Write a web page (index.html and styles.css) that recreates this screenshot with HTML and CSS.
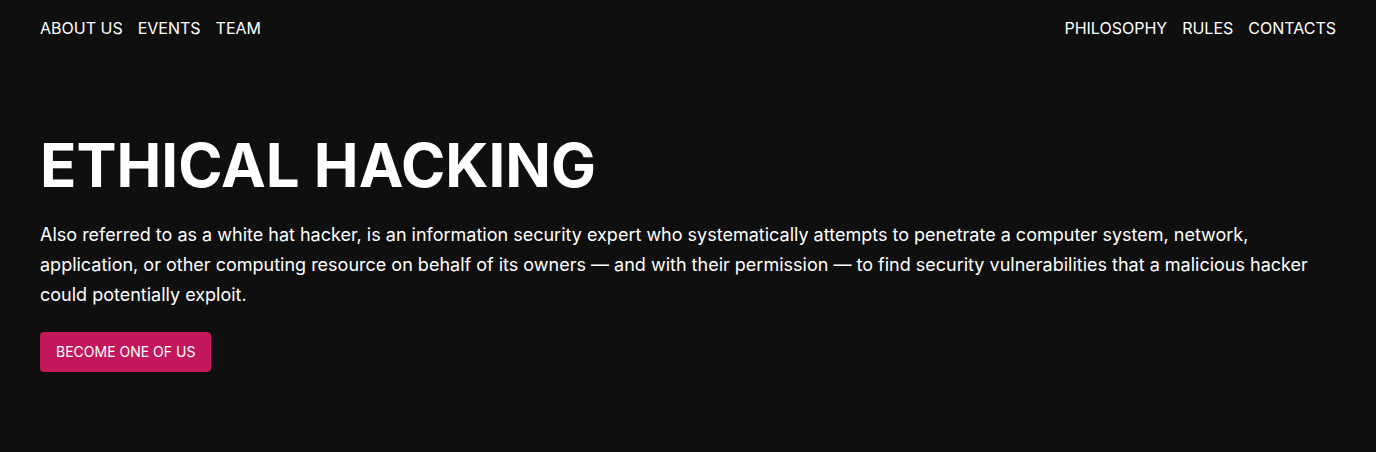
FILE: index.html
```html
<!DOCTYPE html>
<html>
<head>
<meta charset="utf-8">
<link rel="stylesheet" href="styles.css">
</head>
<body>
<header class="nav">
  <nav class="nav-group">
    <a href="#">ABOUT US</a>
    <a href="#">EVENTS</a>
    <a href="#">TEAM</a>
  </nav>
  <nav class="nav-group">
    <a href="#">PHILOSOPHY</a>
    <a href="#">RULES</a>
    <a href="#">CONTACTS</a>
  </nav>
</header>
<main class="hero">
  <h1 class="title">ETHICAL HACKING</h1>
  <p class="lead">Also referred to as a white hat hacker, is an information security expert who systematically attempts to penetrate a computer system, network, application, or other computing resource on behalf of its owners — and with their permission — to find security vulnerabilities that a malicious hacker could potentially exploit.</p>
  <button class="cta">BECOME ONE OF US</button>
</main>
</body>
</html>
```
FILE: styles.css
```css
html, body {
  margin: 0;
  padding: 0;
  background: #0f0f0f;
  color: #ffffff;
  font-family: Inter, "Noto Sans", sans-serif;
}
body {
  height: 452px;
  overflow: hidden;
}
.nav {
  display: flex;
  justify-content: space-between;
  padding: 17px 40px 0 40px;
  height: 22px;
}
.nav-group {
  display: flex;
  gap: 15px;
}
.nav-group a {
  color: #ffffff;
  text-decoration: none;
  font-size: 16px;
  line-height: 22px;
}
.hero {
  padding: 0 40px;
  margin-top: 90px;
}
.title {
  margin: 0;
  font-size: 60px;
  font-weight: 700;
  line-height: 72px;
}
.lead {
  margin: 19px 0 0 0;
  font-size: 18px;
  line-height: 30px;
  color: #ffffff;
}
.cta {
  display: block;
  margin-top: 22px;
  background: #c2185b;
  color: #ffffff;
  border: none;
  border-radius: 4px;
  height: 40px;
  padding: 0 16px 1px 16px;
  font-family: Inter, sans-serif;
  font-size: 14px;
  font-weight: 400;
  cursor: pointer;
}
```
